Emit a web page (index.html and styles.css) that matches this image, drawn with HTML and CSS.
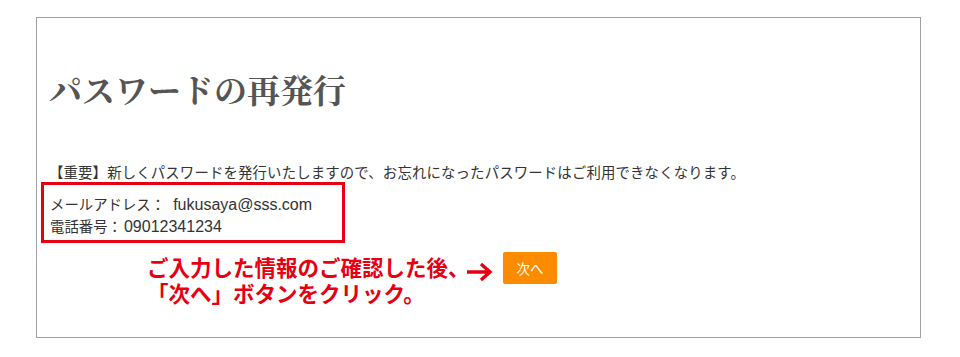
FILE: index.html
```html
<!DOCTYPE html>
<html lang="ja">

<head>
  <meta charset="UTF-8" />
  <meta name="viewport" content="width=device-width, initial-scale=1.0" />
  <title>パスワードの再発行</title>
  <link rel="stylesheet" href="styles.css">
</head>

<body>
  <div class="frame">
    <!-- 見出し -->
    <h1 class="title">パスワードの再発行</h1>
    <p class="notice">【重要】新しくパスワードを発行いたしますので、お忘れになったパスワードはご利用できなくなります。</p>
    <!-- 入力内容 -->
    <div class="confirm_box">
      <p>メールアドレス：<span class="val mail">fukusaya@sss.com</span></p>
      <p>電話番号：<span class="val tel">09012341234</span></p>
    </div>
    <!-- 説明と次へボタン -->
    <div class="guide">
      <p class="guide_text">ご入力した情報のご確認した後、<br>「次へ」ボタンをクリック。</p>
      <svg class="arrow" width="28" height="20" viewBox="0 0 28 20">
        <path d="M1 10 H24 M15 2 L24 10 L15 18" fill="none" stroke="#e60012" stroke-width="3.4" />
      </svg>
      <button class="next_btn">次へ</button>
    </div>
  </div>
</body>

</html>
```

FILE: styles.css
```css
body,
h1,
p {
  margin: 0px;
  padding: 0px;
}

body {
  background-color: #fff;
  font-family: "Liberation Sans", "Noto Sans CJK JP", sans-serif;
  color: #333;
}

.frame {
  width: 885px;
  height: 321px;
  margin: 17px 0 0 36px;
  border: 1px solid #a0a0a0;
  padding: 0 0 0 12px;
  box-sizing: border-box;
}

.title {
  margin-top: 49px;
  font-family: "Noto Serif CJK JP", "Noto Sans CJK JP", serif;
  font-size: 33px;
  font-weight: bold;
  line-height: 44px;
  color: #555;
}

.notice {
  margin-top: 51px;
  font-size: 14.4px;
  letter-spacing: 0.15px;
  line-height: 22px;
}

.confirm_box {
  width: 292px;
  margin: -2px 0 0 -8px;
  padding: 9px 0 2px 6px;
  border: 3px solid #e60012;
}

.confirm_box p {
  font-size: 14.4px;
  line-height: 22px;
}

.val {
  font-size: 16px;
}

.mail {
  margin-left: 8px;
}

.tel {
  margin-left: 2px;
}

.guide {
  display: flex;
  align-items: flex-start;
  margin: 8px 0 0 98px;
}

.guide_text {
  width: 316px;
  margin-top: 5px;
  white-space: nowrap;
  font-size: 21.5px;
  font-weight: bold;
  line-height: 26px;
  color: #e60012;
}

.arrow {
  margin: 11px 0 0 3px;
}

.next_btn {
  margin: 1px 0 0 9px;
  width: 54px;
  height: 32px;
  border: 0;
  border-radius: 2px;
  background-color: #fb8c00;
  color: #fff;
  font-family: "Noto Sans CJK JP", sans-serif;
  font-size: 13.5px;
  cursor: pointer;
}
```
